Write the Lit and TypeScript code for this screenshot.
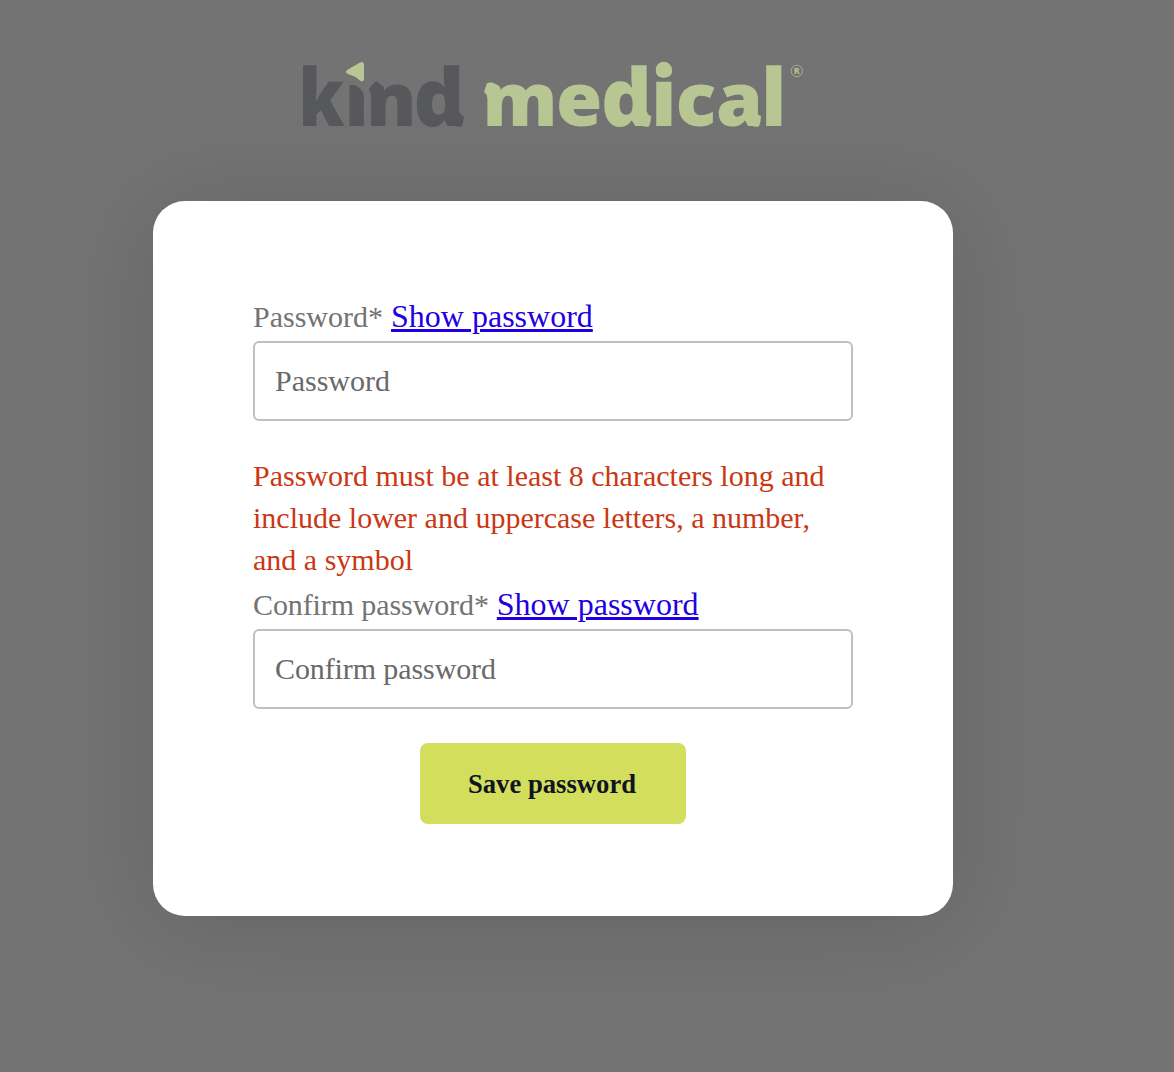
import { LitElement, html, css } from "lit";
import { customElement, property } from "lit/decorators.js";

@customElement("brand-logo")
class BrandLogo extends LitElement {
  static styles = css`
    :host { display: block; width: 520px; height: 80px; }
    svg { display: block; overflow: visible; }
    .word { font: 800 79px "Open Sans", sans-serif; }
    .low { font-size: 75px; }
    .dark { fill: #57585c; }
    .green { fill: #b7c692; }
    .cut { fill: #737373; }
    .mark { font: 700 9px "Open Sans", sans-serif; }
  `;
  render() {
    return html`
      <svg width="520" height="80" viewBox="293 56 520 80" role="img" aria-label="kind medical">
        <text class="word dark" transform="translate(298.6 126) scale(.88 1)">k</text>
        <text class="word dark" y="126" x="344.6 366.2 413.6"><tspan class="low">ın</tspan>d</text>
        <path class="cut" d="M348 80 V83.8 C357 83.8 364 90 364.2 98 H367 V80Z" />
        <path class="green" d="M347 70 L360 62.5 Q364 61 364 65 V79 Q363.5 83 360 80.5 Q355 76 348 74 Q344.5 72.5 347 70Z" />
        <path class="dark" d="M368.7 89 L375 82 Q376 81 377.5 82 L384 87.5 L384 98 H371.5 Q371.5 94 368.7 89Z" />
        <path class="dark" d="M449 112 H459.7 Q460 115 463.7 116 Q463.5 122 461.5 126.5 Q454 128 451 121.5Z" />
        <text class="word green" y="126" x="482.4 555.9 601 651 675.8 716 761"><tspan class="low">me</tspan>di<tspan class="low">ca</tspan>l</text>
        <circle class="green" cx="663.8" cy="69.7" r="8" />
        <path class="green" d="M484 92 L486.7 84 Q487.3 82.5 492 82.6 Q496 83.5 500.5 87.7 L502 98 H487.3 Q487 94 484 92Z" />
        <path class="green" transform="translate(187.5 0)" d="M449 112 H459.7 Q460 115 463.7 116 Q463.5 122 461.5 126.5 Q454 128 451 121.5Z" />
        <path class="green" transform="translate(297.4 0)" d="M449 112 H459.7 Q460 115 463.7 116 Q463.5 122 461.5 126.5 Q454 128 451 121.5Z" />
        <circle cx="796.8" cy="71" r="5.7" fill="none" stroke="#b7c692" stroke-width=".7" />
        <text class="mark green" x="793.8" y="74.3">R</text>
      </svg>
    `;
  }
}

@customElement("password-field")
class PasswordField extends LitElement {
  @property() label = "";
  static styles = css`
    :host { display: block; }
    .head { height: 46px; line-height: 42px; font-size: 32px; white-space: pre; color: #737373; }
    label { font-size: 30px; }
    :host([tight]) label, :host([tight]) input { letter-spacing: -0.1px; }
    a { color: #1f00e0; text-decoration: underline; }
    input {
      display: block; box-sizing: border-box; width: 100%; height: 80px;
      padding: 0 20px; border: 2px solid #c0c0c0; border-radius: 6px;
      background: #fff; font: 30px "Liberation Serif", serif; outline: none;
    }
    input::placeholder { color: #696969; opacity: 1; }
  `;
  render() {
    return html`
      <div class="head"><label for="field">${this.label}*</label> <a href="#">Show password</a></div>
      <input id="field" type="password" placeholder=${this.label} />
    `;
  }
}

@customElement("app-root")
class AppRoot extends LitElement {
  static styles = css`
    :host {
      display: block; box-sizing: border-box; height: 1072px; overflow: hidden;
      padding: 56px 0 0 153px; background: #737373;
      font-family: "Liberation Serif", serif;
    }
    .column { width: 800px; display: flex; flex-direction: column; align-items: center; }
    .card {
      box-sizing: border-box; width: 800px; height: 715px; margin-top: 65px;
      padding: 94px 100px 0; border-radius: 32px; background: #fff;
      box-shadow: 0 8px 100px rgba(0, 0, 0, 0.13);
      display: flex; flex-direction: column;
    }
    .error { margin: 34px 0 2px; font-size: 30px; line-height: 42px; color: #c93814; }
    button {
      align-self: center; width: 266px; height: 81px; margin-top: 34px; padding: 2px 2px 0 0;
      border: 0; border-radius: 8px; background: #d3df5c; color: #101422;
      font: bold 26.667px "Liberation Serif", serif;
    }
  `;
  render() {
    return html`
      <main class="column">
        <brand-logo></brand-logo>
        <form class="card">
          <password-field label="Password"></password-field>
          <p class="error">Password must be at least 8 characters long and include lower and uppercase letters, a number, and a symbol</p>
          <password-field tight label="Confirm password"></password-field>
          <button type="button">Save password</button>
        </form>
      </main>
    `;
  }
}
